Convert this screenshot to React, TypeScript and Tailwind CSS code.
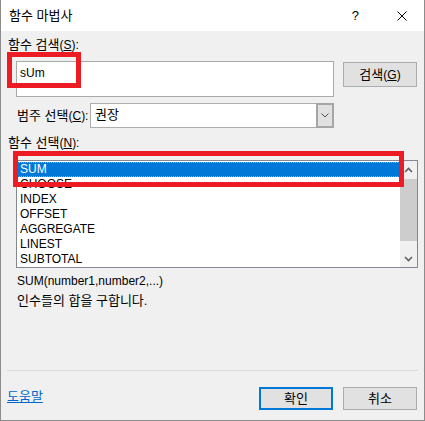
import React from 'react';

const items = ['SUM', 'CHOOSE', 'INDEX', 'OFFSET', 'AGGREGATE', 'LINEST', 'SUBTOTAL'];

const font = { fontFamily: '"Liberation Sans", "Noto Sans CJK KR", sans-serif' };

// 한글 부분은 약간 크게
const Ko = ({ children }: { children: React.ReactNode }) => <span className="text-[13px]">{children}</span>;

const Chevron = ({ dir }: { dir: 'up' | 'down' }) => (
  <svg width="9" height="6" viewBox="0 0 9 6">
    <path
      d={dir === 'up' ? 'M1 5 L4.5 1.5 L8 5' : 'M1 1 L4.5 4.5 L8 1'}
      fill="none"
      stroke="#606060"
      strokeWidth="1.6"
    />
  </svg>
);

const FunctionWizard = () => {
  return (
    <div
      className="relative w-[425px] h-[421px] bg-[#f0f0f0] border-l border-r border-b border-[#8c8c8c] flex flex-col text-[12px] text-black"
      style={font}
    >
      {/* 타이틀 바 */}
      <div className="h-[31px] bg-white flex items-center pl-[8px]">
        <span className="leading-[16px]"><Ko>함수 마법사</Ko></span>
        <span className="ml-auto mr-[38px] text-[13px]">?</span>
        <svg width="10" height="10" viewBox="0 0 10 10" className="mr-[17px]">
          <path d="M0.5 0.5 L9.5 9.5 M9.5 0.5 L0.5 9.5" stroke="#000" strokeWidth="1" />
        </svg>
      </div>

      {/* 함수 검색 */}
      <div className="mt-[6px] ml-[7px] leading-[16px]">
        <Ko>함수 검색</Ko>(<span className="underline">S</span>):
      </div>
      <div className="mt-[8px] flex items-start">
        <div className="ml-[15px] w-[318px] h-[36px] bg-white border border-[#a9a9a9] pl-[3px] pt-[3px] leading-[16px]">
          sUm
        </div>
        <button className="ml-[9px] mt-[1px] w-[74px] h-[25px] bg-[#e1e1e1] border border-[#adadad] leading-[16px]">
          <Ko>검색</Ko>(<span className="underline">G</span>)
        </button>
      </div>

      {/* 범주 선택 */}
      <div className="mt-[6px] flex items-center">
        <span className="ml-[16px] w-[73px] leading-[16px]">
          <Ko>범주 선택</Ko>(<span className="underline">C</span>):
        </span>
        <div className="w-[244px] h-[25px] flex">
          <span className="flex-1 bg-white border-y border-l border-[#adadad] pl-[4px] leading-[22px]">
            <Ko>권장</Ko>
          </span>
          <div className="w-[18px] h-full bg-[#e1e1e1] border-2 border-[#a6a6a6] flex items-center justify-center">
            <svg width="8" height="5" viewBox="0 0 8 5">
              <path d="M0.5 0.5 L4 4 L7.5 0.5" fill="none" stroke="#505050" strokeWidth="1" />
            </svg>
          </div>
        </div>
      </div>

      {/* 함수 선택 */}
      <div className="mt-[7px] ml-[7px] leading-[16px]">
        <Ko>함수 선택</Ko>(<span className="underline">N</span>):
      </div>
      <div className="mt-[9px] ml-[15px] w-[402px] h-[108px] bg-white border border-[#828790] flex">
        <div className="flex-1 pt-[1px]">
          {items.map((item, index) => (
            <div
              key={index}
              className={
                index === 0
                  ? 'h-[15px] leading-[13px] pl-[2px] bg-[#0078d7] text-white border border-dotted border-[#e0a050]'
                  : 'h-[15px] leading-[15px] pl-[3px]'
              }
            >
              {item}
            </div>
          ))}
        </div>
        <div className="w-[17px] bg-[#f0f0f0] flex flex-col">
          <div className="h-[17px] flex items-center justify-center">
            <Chevron dir="up" />
          </div>
          <div className="mt-[1px] h-[62px] bg-[#cdcdcd]" />
          <div className="mt-auto h-[17px] flex items-center justify-center">
            <Chevron dir="down" />
          </div>
        </div>
      </div>

      {/* 설명 */}
      <div className="mt-[4px] ml-[16px] leading-[19px]">
        <div>SUM(number1,number2,...)</div>
        <div><Ko>인수들의 합을 구합니다.</Ko></div>
      </div>

      {/* 하단 */}
      <div className="mt-auto mx-[6px] h-px bg-[#dadada]" />
      <div className="mt-[16px] mb-[10px] flex items-center">
        <a className="ml-[6px] mb-[4px] text-[#0066cc] underline leading-[16px]"><Ko>도움말</Ko></a>
        <button className="ml-auto w-[74px] h-[23px] bg-[#e1e1e1] border-2 border-[#0078d7] leading-[16px]">
          <Ko>확인</Ko>
        </button>
        <button className="ml-[10px] mr-[7px] w-[74px] h-[23px] bg-[#e1e1e1] border border-[#adadad] leading-[16px]">
          <Ko>취소</Ko>
        </button>
      </div>

      {/* 강조 표시 */}
      <div className="absolute left-[6px] top-[52px] w-[74px] h-[36px] border-[5px] border-[#ed1c24]" />
      <div className="absolute left-[12px] top-[151px] w-[391px] h-[36px] border-[5px] border-[#ed1c24]" />
    </div>
  );
};

export default function App() {
  return <FunctionWizard />;
}
